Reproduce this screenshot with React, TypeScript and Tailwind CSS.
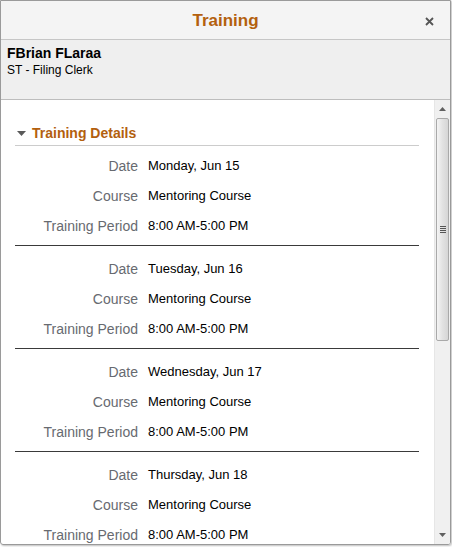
import React from "react";

type Session = { date: string; course: string; period: string };

const sessions: Session[] = [
  { date: "Monday, Jun 15", course: "Mentoring Course", period: "8:00 AM-5:00 PM" },
  { date: "Tuesday, Jun 16", course: "Mentoring Course", period: "8:00 AM-5:00 PM" },
  { date: "Wednesday, Jun 17", course: "Mentoring Course", period: "8:00 AM-5:00 PM" },
  { date: "Thursday, Jun 18", course: "Mentoring Course", period: "8:00 AM-5:00 PM" },
];

const Field = ({ label, value }: { label: string; value: string }) => (
  <div className="flex h-[30px] items-center">
    <div className="w-[123px] text-right text-[14px] text-[#676a70]">{label}</div>
    <div className="ml-[10px] text-[13px] text-black">{value}</div>
  </div>
);

const Scrollbar = () => (
  <div className="flex w-[16px] shrink-0 flex-col border-l border-[#e6e6e6] bg-[#f0f0f0]">
    <div className="flex h-[18px] items-center justify-center">
      <svg width="7" height="4" viewBox="0 0 7 4">
        <path d="M3.5 0 L7 4 L0 4 Z" fill="#606060" />
      </svg>
    </div>
    <div className="mx-[1px] flex h-[223px] items-center justify-center rounded-[2px] border border-[#a9a9a9] bg-gradient-to-r from-[#f4f4f4] via-[#e2e2e2] to-[#d6d6d6]">
      <div className="flex flex-col gap-[1px]">
        <div className="h-[1px] w-[6px] bg-[#555]" />
        <div className="h-[1px] w-[6px] bg-[#555]" />
        <div className="h-[1px] w-[6px] bg-[#555]" />
        <div className="h-[1px] w-[6px] bg-[#555]" />
      </div>
    </div>
    <div className="flex-1" />
    <div className="flex h-[18px] items-center justify-center">
      <svg width="7" height="4" viewBox="0 0 7 4">
        <path d="M0 0 L7 0 L3.5 4 Z" fill="#606060" />
      </svg>
    </div>
  </div>
);

export default function App() {
  return (
    <div className="h-[547px] w-[452px] bg-white" style={{ fontFamily: '"Liberation Sans", Arial, sans-serif' }}>
      <div className="flex h-[545px] w-[451px] flex-col overflow-hidden rounded-b-[3px] border border-[#9a9a9a] shadow-[1px_1px_2px_rgba(0,0,0,0.25)]">
        <div className="relative flex h-[39px] shrink-0 items-center justify-center border-b border-[#c6c6c6] bg-[#f4f4f4] pt-[2px]">
          <span className="text-[17px] font-bold text-[#b3600e]">Training</span>
          <svg className="absolute right-[16px] top-[16px]" width="9" height="9" viewBox="0 0 9 9">
            <path d="M1 1 L8 8 M8 1 L1 8" stroke="#555" strokeWidth="1.8" />
          </svg>
        </div>
        <div className="h-[60px] shrink-0 border-b border-[#bdbdbd] bg-[#efefef] px-[6px] pt-[5px]">
          <div className="text-[14px] font-bold leading-[17px] text-black">FBrian FLaraa</div>
          <div className="text-[12px] leading-[16px] text-black">ST - Filing Clerk</div>
        </div>
        <div className="flex min-h-0 flex-1">
          <div className="min-w-0 flex-1 overflow-hidden pl-[14px] pr-[15px] pt-[24px]">
            <div className="flex h-[22px] items-center border-b border-[#cccccc] pb-[2px]">
              <svg className="ml-[2px]" width="9" height="5" viewBox="0 0 9 5">
                <path d="M0 0 L9 0 L4.5 5 Z" fill="#5a5a5a" />
              </svg>
              <span className="ml-[6px] text-[14px] font-bold text-[#b3600e]">Training Details</span>
            </div>
            {sessions.map((s, i) => (
              <div
                key={i}
                className={`border-b border-[#3a3a3a] pb-[4px] ${i === 0 ? "pt-[5px]" : "pt-[8px]"}`}
              >
                <Field label="Date" value={s.date} />
                <Field label="Course" value={s.course} />
                <Field label="Training Period" value={s.period} />
              </div>
            ))}
          </div>
          <Scrollbar />
        </div>
      </div>
    </div>
  );
}
